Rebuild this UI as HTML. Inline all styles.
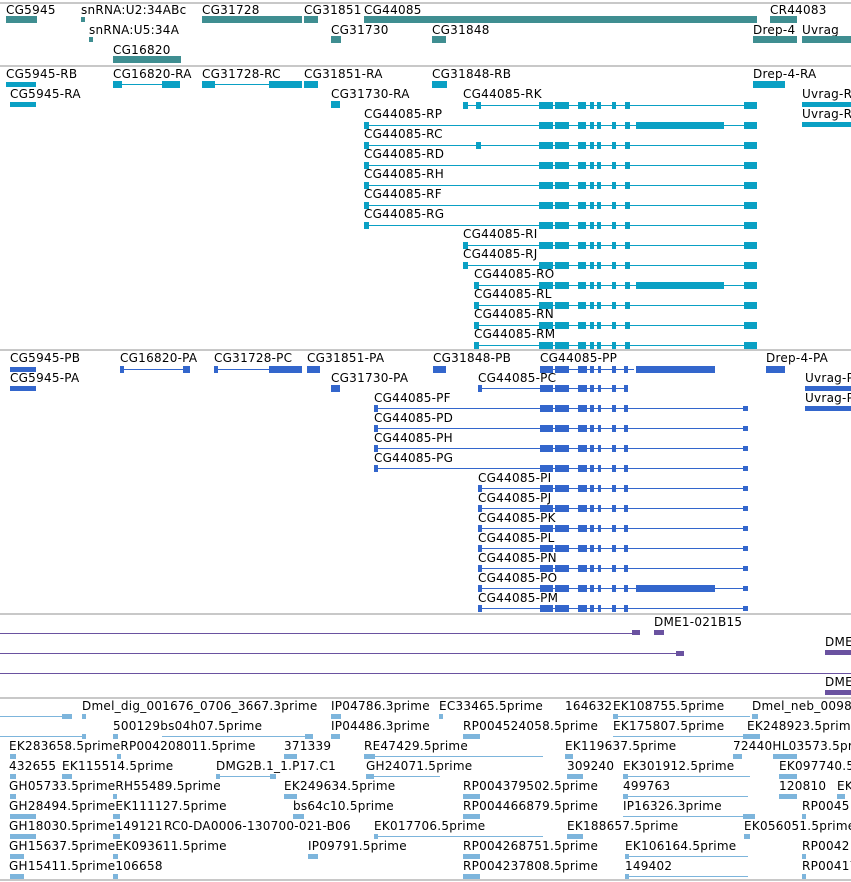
<!DOCTYPE html>
<html><head><meta charset="utf-8"><style>
html,body{margin:0;padding:0;background:#fff;width:851px;height:882px;overflow:hidden;position:relative}
.t{position:absolute;font:12px "DejaVu Sans",sans-serif;line-height:14px;white-space:nowrap;color:#000;letter-spacing:0.25px}
.s{position:absolute;left:0;width:851px;height:2px;background:#c8c8c8}
i{position:absolute;display:block}
</style></head><body>
<div class="s" style="top:2px"></div>
<div class="s" style="top:65px"></div>
<div class="s" style="top:349px"></div>
<div class="s" style="top:613px"></div>
<div class="s" style="top:697px"></div>
<div class="s" style="top:879px"></div>

<div class="t" style="left:6px;top:3px">CG5945</div>
<div class="t" style="left:81px;top:3px">snRNA:U2:34ABc</div>
<div class="t" style="left:202px;top:3px">CG31728</div>
<div class="t" style="left:304px;top:3px">CG31851</div>
<div class="t" style="left:364px;top:3px">CG44085</div>
<div class="t" style="left:770px;top:3px">CR44083</div>
<div class="t" style="left:89px;top:23px">snRNA:U5:34A</div>
<div class="t" style="left:331px;top:23px">CG31730</div>
<div class="t" style="left:432px;top:23px">CG31848</div>
<div class="t" style="left:753px;top:23px">Drep-4</div>
<div class="t" style="left:802px;top:23px">Uvrag</div>
<div class="t" style="left:113px;top:43px">CG16820</div>

<div class="t" style="left:6px;top:67px">CG5945-RB</div>
<div class="t" style="left:113px;top:67px">CG16820-RA</div>
<div class="t" style="left:202px;top:67px">CG31728-RC</div>
<div class="t" style="left:304px;top:67px">CG31851-RA</div>
<div class="t" style="left:432px;top:67px">CG31848-RB</div>
<div class="t" style="left:753px;top:67px">Drep-4-RA</div>
<div class="t" style="left:10px;top:87px">CG5945-RA</div>
<div class="t" style="left:331px;top:87px">CG31730-RA</div>
<div class="t" style="left:802px;top:87px">Uvrag-RA</div>
<div class="t" style="left:463px;top:87px">CG44085-RK</div>
<div class="t" style="left:802px;top:107px">Uvrag-RB</div>
<div class="t" style="left:364px;top:107px">CG44085-RP</div>
<div class="t" style="left:364px;top:127px">CG44085-RC</div>
<div class="t" style="left:364px;top:147px">CG44085-RD</div>
<div class="t" style="left:364px;top:167px">CG44085-RH</div>
<div class="t" style="left:364px;top:187px">CG44085-RF</div>
<div class="t" style="left:364px;top:207px">CG44085-RG</div>
<div class="t" style="left:463px;top:227px">CG44085-RI</div>
<div class="t" style="left:463px;top:247px">CG44085-RJ</div>
<div class="t" style="left:474px;top:267px">CG44085-RO</div>
<div class="t" style="left:474px;top:287px">CG44085-RL</div>
<div class="t" style="left:474px;top:307px">CG44085-RN</div>
<div class="t" style="left:474px;top:327px">CG44085-RM</div>

<div class="t" style="left:10px;top:351px">CG5945-PB</div>
<div class="t" style="left:120px;top:351px">CG16820-PA</div>
<div class="t" style="left:214px;top:351px">CG31728-PC</div>
<div class="t" style="left:307px;top:351px">CG31851-PA</div>
<div class="t" style="left:433px;top:351px">CG31848-PB</div>
<div class="t" style="left:540px;top:351px">CG44085-PP</div>
<div class="t" style="left:766px;top:351px">Drep-4-PA</div>
<div class="t" style="left:10px;top:371px">CG5945-PA</div>
<div class="t" style="left:331px;top:371px">CG31730-PA</div>
<div class="t" style="left:478px;top:371px">CG44085-PC</div>
<div class="t" style="left:805px;top:371px">Uvrag-PA</div>
<div class="t" style="left:374px;top:391px">CG44085-PF</div>
<div class="t" style="left:805px;top:391px">Uvrag-PB</div>
<div class="t" style="left:374px;top:411px">CG44085-PD</div>
<div class="t" style="left:374px;top:431px">CG44085-PH</div>
<div class="t" style="left:374px;top:451px">CG44085-PG</div>
<div class="t" style="left:478px;top:471px">CG44085-PI</div>
<div class="t" style="left:478px;top:491px">CG44085-PJ</div>
<div class="t" style="left:478px;top:511px">CG44085-PK</div>
<div class="t" style="left:478px;top:531px">CG44085-PL</div>
<div class="t" style="left:478px;top:551px">CG44085-PN</div>
<div class="t" style="left:478px;top:571px">CG44085-PO</div>
<div class="t" style="left:478px;top:591px">CG44085-PM</div>

<div class="t" style="left:654px;top:615px">DME1-021B15</div>
<div class="t" style="left:825px;top:635px">DME</div>
<div class="t" style="left:825px;top:675px">DME</div>

<div class="t" style="left:82px;top:699px">Dmel_dig_001676_0706_3667.3prime</div>
<div class="t" style="left:331px;top:699px">IP04786.3prime</div>
<div class="t" style="left:439px;top:699px">EC33465.5prime</div>
<div class="t" style="left:565px;top:699px">164632</div>
<div class="t" style="left:613px;top:699px">EK108755.5prime</div>
<div class="t" style="left:752px;top:699px">Dmel_neb_00985</div>
<div class="t" style="left:113px;top:719px">500129bs04h07.5prime</div>
<div class="t" style="left:331px;top:719px">IP04486.3prime</div>
<div class="t" style="left:463px;top:719px">RP004524058.5prime</div>
<div class="t" style="left:613px;top:719px">EK175807.5prime</div>
<div class="t" style="left:747px;top:719px">EK248923.5prime</div>
<div class="t" style="left:9px;top:739px">EK283658.5primeRP004208011.5prime</div>
<div class="t" style="left:284px;top:739px">371339</div>
<div class="t" style="left:364px;top:739px">RE47429.5prime</div>
<div class="t" style="left:565px;top:739px">EK119637.5prime</div>
<div class="t" style="left:733px;top:739px">72440HL03573.5prime</div>
<div class="t" style="left:9px;top:759px">432655</div>
<div class="t" style="left:62px;top:759px">EK115514.5prime</div>
<div class="t" style="left:216px;top:759px">DMG2B.1_1.P17.C1</div>
<div class="t" style="left:366px;top:759px">GH24071.5prime</div>
<div class="t" style="left:567px;top:759px">309240</div>
<div class="t" style="left:623px;top:759px">EK301912.5prime</div>
<div class="t" style="left:779px;top:759px">EK097740.5prime</div>
<div class="t" style="left:9px;top:779px">GH05733.5primeRH55489.5prime</div>
<div class="t" style="left:284px;top:779px">EK249634.5prime</div>
<div class="t" style="left:463px;top:779px">RP004379502.5prime</div>
<div class="t" style="left:623px;top:779px">499763</div>
<div class="t" style="left:779px;top:779px">120810</div>
<div class="t" style="left:837px;top:779px">EK</div>
<div class="t" style="left:9px;top:799px">GH28494.5primeEK111127.5prime</div>
<div class="t" style="left:293px;top:799px">bs64c10.5prime</div>
<div class="t" style="left:463px;top:799px">RP004466879.5prime</div>
<div class="t" style="left:623px;top:799px">IP16326.3prime</div>
<div class="t" style="left:802px;top:799px">RP0045</div>
<div class="t" style="left:9px;top:819px">GH18030.5prime149121</div>
<div class="t" style="left:164px;top:819px">RC0-DA0006-130700-021-B06</div>
<div class="t" style="left:374px;top:819px">EK017706.5prime</div>
<div class="t" style="left:567px;top:819px">EK188657.5prime</div>
<div class="t" style="left:744px;top:819px">EK056051.5prime</div>
<div class="t" style="left:9px;top:839px">GH15637.5primeEK093611.5prime</div>
<div class="t" style="left:308px;top:839px">IP09791.5prime</div>
<div class="t" style="left:463px;top:839px">RP004268751.5prime</div>
<div class="t" style="left:625px;top:839px">EK106164.5prime</div>
<div class="t" style="left:802px;top:839px">RP0042</div>
<div class="t" style="left:9px;top:859px">GH15411.5prime106658</div>
<div class="t" style="left:463px;top:859px">RP004237808.5prime</div>
<div class="t" style="left:625px;top:859px">149402</div>
<div class="t" style="left:802px;top:859px">RP00417</div>

<div id="g"></div>
<script>
var G=document.getElementById('g'),h='';
function B(x1,x2,y,c,hh){hh=hh||7;h+='<i style="left:'+x1+'px;top:'+(y-Math.floor(hh/2))+'px;width:'+(x2-x1)+'px;height:'+hh+'px;background:'+c+'"></i>';}
function L(x1,x2,y,c){h+='<i style="left:'+x1+'px;top:'+y+'px;width:'+(x2-x1)+'px;height:1px;background:'+c+'"></i>';}
var T='#3f8e91',C='#0aa0c4',U='#3366cc',P='#6a52a0',E='#7db5dc';
B(6,37,19,T);B(81,85,19,T,5);B(202,302,19,T);B(304,318,19,T);B(364,757,19,T);B(770,797,19,T);
B(89,93,39,T,5);B(331,341,39,T);B(432,446,39,T);B(753,797,39,T);B(802,851,39,T);B(113,181,59,T);
B(6,36,84,C,5);L(113,180,84,C);B(113,122,84,C);B(162,180,84,C);L(202,302,84,C);B(202,215,84,C);B(269,302,84,C);
B(304,318,84,C);B(432,447,84,C);B(753,785,84,C);B(10,36,104,C,5);B(331,340,104,C);B(802,851,104,C,5);B(802,851,124,C,5);
var ex=[[539,553],[555,569],[578,586],[590,594],[597,601],[612,616],[625,630],[744,757]];
var rows=[[463,105],[364,125,1],[364,145],[364,165],[364,185],[364,205],[364,225],[463,245],[463,265],[474,285,1],[474,305],[474,325],[474,345]];
rows.forEach(function(r,k){L(r[0],750,r[1],C);B(r[0],r[0]+5,r[1],C);ex.forEach(function(e){B(e[0],e[1],r[1],C)});if(r[2])B(636,724,r[1],C);if(k==0){B(476,481,r[1],C)}if(k==2)B(476,481,r[1],C);});
B(10,36,369,U,5);L(120,190,369,U);B(120,124,369,U);B(183,190,369,U);L(214,302,369,U);B(214,218,369,U);B(269,302,369,U);
B(307,320,369,U);B(433,446,369,U);L(540,634,369,U);B(766,785,369,U);B(10,36,388,U,5);B(331,340,388,U);B(805,851,388,U,5);B(805,851,408,U,5);
var ex2=[[540,553],[555,569],[578,587],[590,594],[598,601],[612,616],[624,628]];
ex2.forEach(function(e){B(e[0],e[1],369,U)});B(636,715,369,U);
L(478,626,388,U);B(478,482,388,U);ex2.forEach(function(e){B(e[0],e[1],388,U)});
var rows2=[[374,408],[374,428],[374,448],[374,468],[478,488],[478,508],[478,528],[478,548],[478,568],[478,588,1],[478,608]];
rows2.forEach(function(r){L(r[0],748,r[1],U);B(r[0],r[0]+4,r[1],U);ex2.forEach(function(e){B(e[0],e[1],r[1],U)});B(743,748,r[1],U,5);if(r[2])B(636,715,r[1],U);});
L(0,640,633,P);B(632,640,632,P,5);B(654,664,632,P,5);L(0,684,653,P);B(676,684,653,P,5);B(825,851,652,P,5);L(0,851,673,P);B(825,851,692,P,5);
L(0,70,716,E);B(62,72,716,E,5);B(82,86,716,E,5);B(331,341,716,E,5);B(439,443,716,E,5);L(613,750,716,E);B(613,618,716,E,5);B(752,758,716,E,5);
L(0,86,736,E);B(82,86,736,E,5);B(113,118,736,E,5);L(162,313,736,E);B(305,313,736,E,5);B(331,340,736,E,5);B(463,480,736,E,5);L(613,760,736,E);B(743,760,736,E,5);
B(10,16,756,E,5);B(117,121,756,E,5);B(284,297,756,E,5);L(364,543,756,E);B(364,375,756,E,5);B(565,573,756,E,5);B(733,742,756,E,5);B(773,797,756,E,5);
B(10,16,776,E,5);B(62,72,776,E,5);L(216,276,776,E);B(216,220,776,E,5);B(270,276,776,E,5);L(366,440,776,E);B(366,374,776,E,5);B(567,583,776,E,5);L(623,750,776,E);B(623,628,776,E,5);B(779,797,776,E,5);
B(10,16,796,E,5);B(113,117,796,E,5);B(284,297,796,E,5);B(463,480,796,E,5);L(623,748,796,E);B(623,628,796,E,5);B(779,797,796,E,5);B(837,845,796,E,5);
B(10,36,816,E,5);B(113,120,816,E,5);B(293,304,816,E,5);B(463,480,816,E,5);L(623,755,816,E);B(743,755,816,E,5);B(802,806,816,E,5);
B(10,36,836,E,5);B(113,120,836,E,5);L(374,543,836,E);B(374,378,836,E,5);B(567,583,836,E,5);B(744,750,836,E,5);
B(10,24,856,E,5);B(113,118,856,E,5);B(308,318,856,E,5);B(463,480,856,E,5);L(625,748,856,E);B(625,629,856,E,5);B(802,806,856,E,5);
B(10,24,876,E,5);B(113,118,876,E,5);B(463,480,876,E,5);L(625,748,876,E);B(625,629,876,E,5);B(802,806,876,E,5);
G.innerHTML=h;
</script>
</body></html>
